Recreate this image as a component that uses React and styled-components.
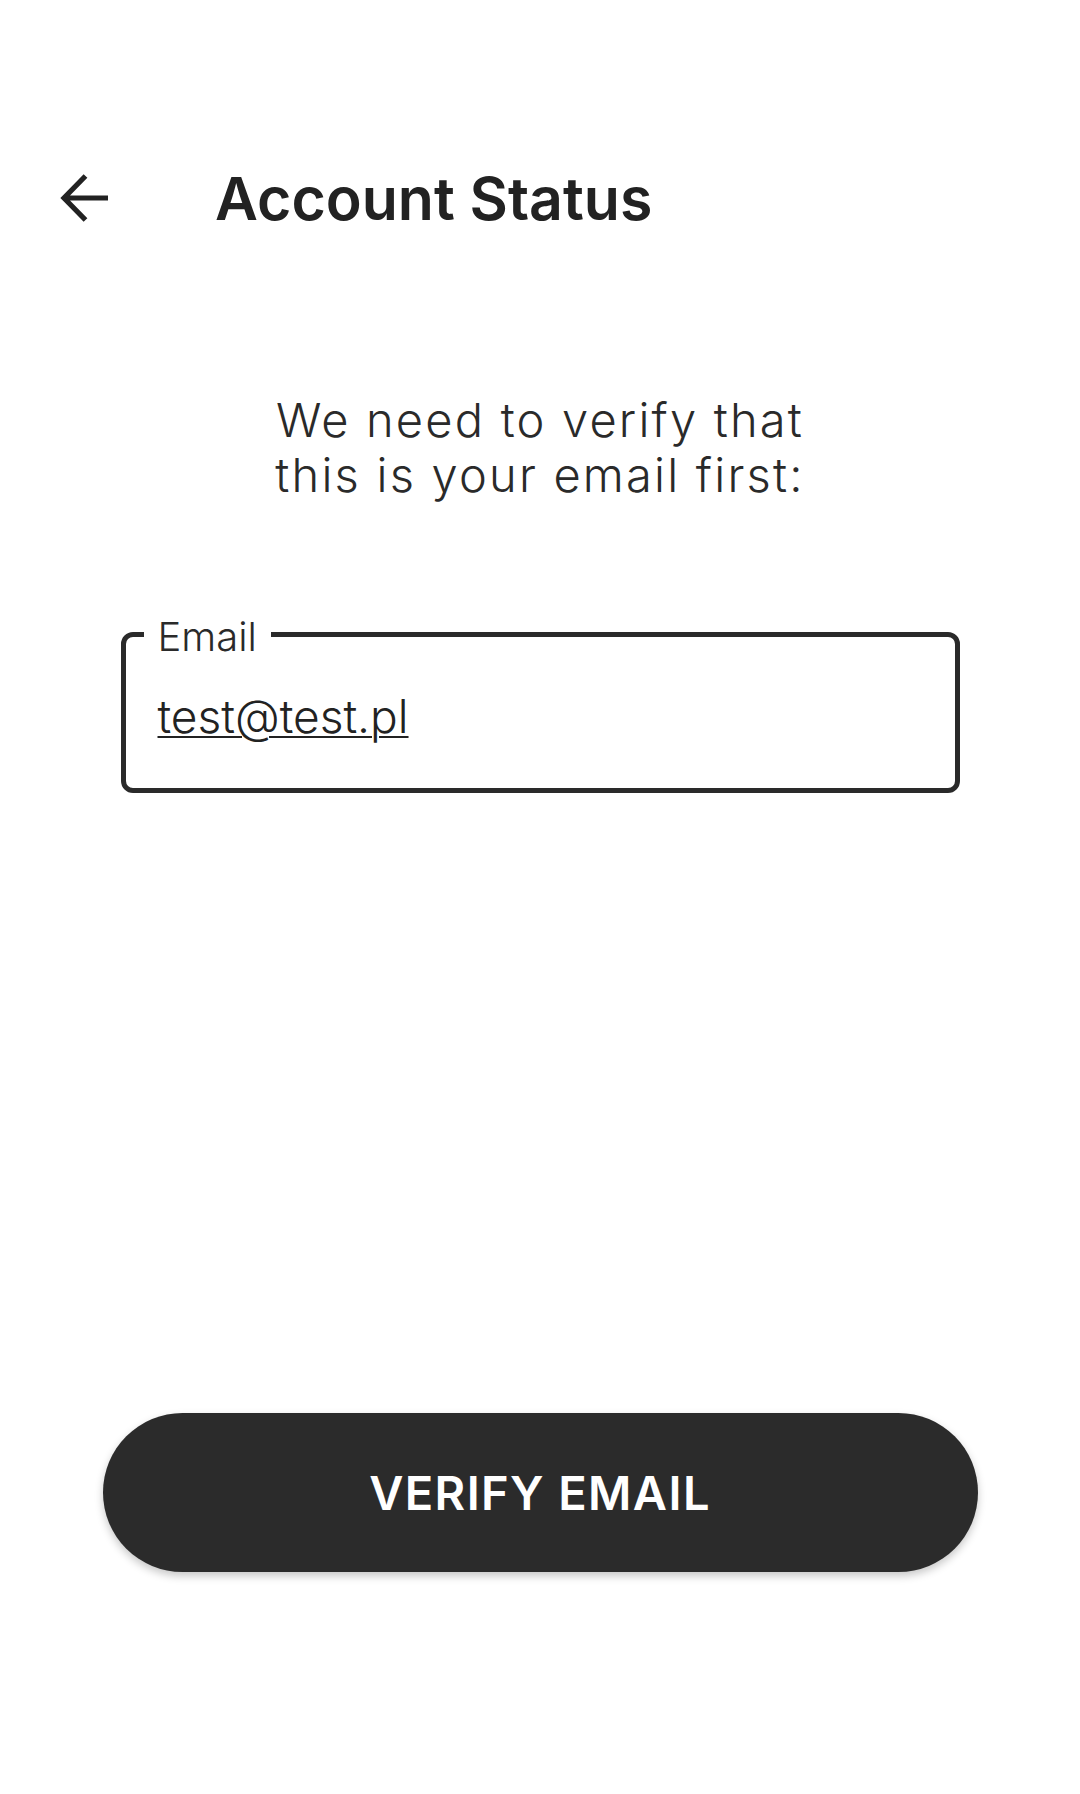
import React from "react";
import styled, { createGlobalStyle } from "styled-components";

const GlobalStyle = createGlobalStyle`
  html, body {
    margin: 0;
    padding: 0;
    background: #ffffff;
  }
  body {
    font-family: Inter, "Noto Sans", "Liberation Sans", sans-serif;
    color: #222222;
  }
`;

const Page = styled.div`
  width: 1080px;
  height: 1794px;
  display: flex;
  flex-direction: column;
  background: #ffffff;
  box-sizing: border-box;
`;

const Header = styled.header`
  display: flex;
  align-items: center;
  height: 120px;
  margin-top: 138px;
  padding-left: 60px;
  gap: 107px;
`;

const BackButton = styled.button`
  width: 48px;
  height: 48px;
  padding: 0;
  border: none;
  background: transparent;
  display: flex;
  align-items: center;
  justify-content: center;
  color: #222222;
`;

const Title = styled.h1`
  margin: 0;
  font-size: 59px;
  line-height: 1;
  font-weight: 600;
  color: #222222;
  letter-spacing: 0px;
`;

const Message = styled.p`
  margin: 134px 0 0;
  text-align: center;
  font-size: 47px;
  line-height: 55px;
  font-weight: 300;
  color: #2a2a2a;
  letter-spacing: 2.2px;
`;

const Field = styled.div`
  position: relative;
  align-self: center;
  margin-top: 130px;
  width: 839px;
  height: 161px;
  box-sizing: border-box;
  border: 5px solid #2a2a2a;
  border-radius: 12px;
  padding: 51px 32px 0;
`;

const FieldLabel = styled.label`
  position: absolute;
  left: 18px;
  top: -24px;
  padding: 0 14px;
  background: #ffffff;
  font-size: 40px;
  line-height: 48px;
  font-weight: 300;
  color: #2a2a2a;
`;

const FieldValue = styled.div`
  font-size: 46px;
  line-height: 56px;
  font-weight: 300;
  color: #222222;
  text-decoration: underline;
  text-decoration-thickness: 2px;
  text-underline-offset: 3px;
`;

const Spacer = styled.div`
  flex: 1;
`;

const PrimaryButton = styled.button`
  align-self: center;
  width: 875px;
  height: 159px;
  margin-bottom: 222px;
  border: none;
  border-radius: 80px;
  background: #2b2b2b;
  color: #ffffff;
  font-family: Inter, "Noto Sans", "Liberation Sans", sans-serif;
  font-size: 47px;
  font-weight: 600;
  letter-spacing: 1.4px;
  box-shadow: 0 4px 8px rgba(0, 0, 0, 0.22);
`;

const ArrowBack = () => (
  <svg width="48" height="48" viewBox="0 0 48 48" fill="none">
    <path
      d="M48 24H4M25.5 2L4 24L25.5 46"
      stroke="currentColor"
      strokeWidth="5.2"
      strokeLinejoin="miter"
    />
  </svg>
);

export default function App() {
  return (
    <>
      <GlobalStyle />
      <Page>
        <Header>
          <BackButton aria-label="Back">
            <ArrowBack />
          </BackButton>
          <Title>Account Status</Title>
        </Header>
        <Message>
          We need to verify that
          <br />
          this is your email first:
        </Message>
        <Field>
          <FieldLabel>Email</FieldLabel>
          <FieldValue>test@test.pl</FieldValue>
        </Field>
        <Spacer />
        <PrimaryButton>VERIFY EMAIL</PrimaryButton>
      </Page>
    </>
  );
}
